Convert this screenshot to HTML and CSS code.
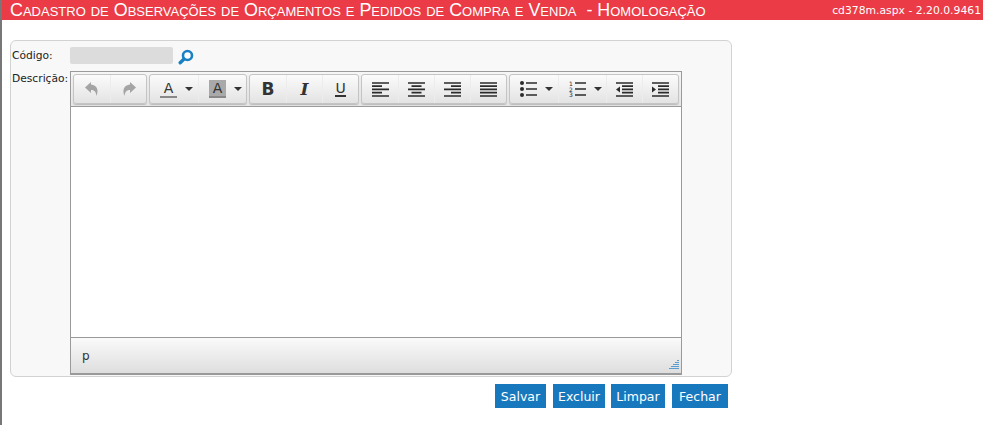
FILE: index.html
```html
<!DOCTYPE html>
<html lang="pt-BR">
<head>
    <meta charset="UTF-8">
    <meta name="viewport" content="width=device-width, initial-scale=1.0">
    <title>Cadastro de Observações de Orçamentos e Pedidos de Compra e Venda</title>
    <link rel="stylesheet" href="styles.css">
</head>
<body>
    <div class="page">
        <div class="header">
            <div class="title">Cadastro de Observações de Orçamentos e Pedidos de Compra e Venda &nbsp;- Homologação</div>
            <div class="version">cd378m.aspx - 2.20.0.9461</div>
        </div>

        <div class="panel">
            <div class="row row-code">
                <label class="label">Código:</label>
                <div class="input"></div>
                <svg class="search" width="16" height="16" viewBox="0 0 16 16">
                    <circle cx="9.500" cy="6.500" r="4.500" fill="#fff" stroke="#1a80c4" stroke-width="2.600"/>
                    <path d="M6 10 2.200 13.800" stroke="#1a80c4" stroke-width="3.400" stroke-linecap="round"/>
                </svg>
            </div>
            <div class="row">
                <label class="label label-desc">Descrição:</label>
                <div class="editor">
                    <div class="toolbar">
                        <div class="group">
                            <button class="tool off">
                                <svg width="16" height="16" viewBox="0 0 16 16"><path d="M7 1 1 6.500l6 5.500V9c3 0 5 1.500 5.500 6 2.500-6 .5-11-5.500-11.500z" fill="#a4a4a4"/></svg>
                            </button>
                            <button class="tool off">
                                <svg width="16" height="16" viewBox="0 0 16 16"><path d="M9 1l6 5.500L9 12V9c-3 0-5 1.500-5.500 6C1 9 3 4 9 3.500z" fill="#a4a4a4"/></svg>
                            </button>
                        </div>
                        <div class="group">
                            <button class="tool split">
                                <span class="letter letter-color">A</span><span class="caret"></span>
                            </button>
                            <button class="tool split">
                                <span class="letter letter-back">A</span><span class="caret"></span>
                            </button>
                        </div>
                        <div class="group">
                            <button class="tool"><span class="fmt fmt-b">B</span></button>
                            <button class="tool"><span class="fmt fmt-i">I</span></button>
                            <button class="tool"><span class="fmt fmt-u">U</span></button>
                        </div>
                        <div class="group">
                            <button class="tool">
                                <svg width="17" height="15" viewBox="0 0 17 15"><path d="M0 1h17M0 4.200h10M0 7.400h17M0 10.600h10M0 14h17" stroke="#2b2b2b" stroke-width="1.700"/></svg>
                            </button>
                            <button class="tool">
                                <svg width="17" height="15" viewBox="0 0 17 15"><path d="M0 1h17M3.500 4.200h10M0 7.400h17M3.500 10.600h10M0 14h17" stroke="#2b2b2b" stroke-width="1.700"/></svg>
                            </button>
                            <button class="tool">
                                <svg width="17" height="15" viewBox="0 0 17 15"><path d="M0 1h17M7 4.200h10M0 7.400h17M7 10.600h10M0 14h17" stroke="#2b2b2b" stroke-width="1.700"/></svg>
                            </button>
                            <button class="tool">
                                <svg width="17" height="15" viewBox="0 0 17 15"><path d="M0 1h17M0 4.200h17M0 7.400h17M0 10.600h17M0 14h17" stroke="#2b2b2b" stroke-width="1.700"/></svg>
                            </button>
                        </div>
                        <div class="group">
                            <button class="tool split">
                                <svg width="17" height="16" viewBox="0 0 17 16">
                                    <circle cx="2" cy="2" r="2" fill="#2b2b2b"/>
                                    <circle cx="2" cy="8" r="2" fill="#2b2b2b"/>
                                    <circle cx="2" cy="14" r="2" fill="#2b2b2b"/>
                                    <path d="M6 2h11M6 8h11M6 14h11" stroke="#2b2b2b" stroke-width="1.700"/>
                                </svg><span class="caret"></span>
                            </button>
                            <button class="tool split">
                                <svg width="17" height="16" viewBox="0 0 17 16">
                                    <text x="0" y="5" class="num">1</text>
                                    <text x="0" y="10.500" class="num">2</text>
                                    <text x="0" y="16" class="num">3</text>
                                    <path d="M6 2h11M6 8h11M6 14h11" stroke="#2b2b2b" stroke-width="1.700"/>
                                </svg><span class="caret"></span>
                            </button>
                            <button class="tool">
                                <svg width="17" height="15" viewBox="0 0 17 15"><path d="M0 1h17M6 4.200h11M6 7.400h11M6 10.600h11M0 14h17" stroke="#2b2b2b" stroke-width="1.700"/><path d="M4 4.500v6L0 7.500z" fill="#2b2b2b"/></svg>
                            </button>
                            <button class="tool">
                                <svg width="17" height="15" viewBox="0 0 17 15"><path d="M0 1h17M6 4.200h11M6 7.400h11M6 10.600h11M0 14h17" stroke="#2b2b2b" stroke-width="1.700"/><path d="M0 4.500v6l4-3z" fill="#2b2b2b"/></svg>
                            </button>
                        </div>
                    </div>
                    <div class="content"></div>
                    <div class="statusbar">
                        <span class="path">p</span>
                        <svg class="grip" width="12" height="12" viewBox="0 0 12 12">
                            <path d="M9 1.500h2M7 3.500h4M5 5.500h6M3 7.500h8M1 9.500h10" stroke="#5a9bd0" stroke-width="1"/>
                        </svg>
                    </div>
                </div>
            </div>
        </div>

        <div class="actions">
            <button class="btn btn-salvar">Salvar</button>
            <button class="btn btn-excluir">Excluir</button>
            <button class="btn btn-limpar">Limpar</button>
            <button class="btn btn-fechar">Fechar</button>
        </div>
    </div>
</body>
</html>
```

FILE: styles.css
```css
html, body { margin: 0; padding: 0; background: #fff; }
body { font-family: "DejaVu Sans", Verdana, sans-serif; font-size: 10px; color: #222; }
.page { height: 425px; box-sizing: border-box; border-left: 2px solid #777; padding-right: 2px; overflow: hidden; }

.header { height: 20px; background: #ea3b46; color: #fff; display: flex; justify-content: space-between; align-items: center; padding: 0 2px 0 8px; }
.title { font-family: "Liberation Sans", Arial, sans-serif; font-size: 17.900px; font-variant: small-caps; white-space: pre; }
.version { font-size: 10.800px; font-weight: 400; }

.panel { margin: 20px 0 0 8px; width: 722px; height: 337px; box-sizing: border-box; border: 1px solid #d2d2d2; border-radius: 6px; background: #f8f8f8; padding: 6px 0 0 1px; }
.row { display: flex; align-items: flex-start; }
.row-code { height: 24px; }
.label { width: 58px; font-size: 10.700px; line-height: 17px; }
.label-desc { margin-top: -1px; }
.input { width: 103px; height: 17px; background: #dcdcdc; border-radius: 2px; }
.search { margin: 2px 0 0 5px; }

.editor { width: 612px; height: 304px; box-sizing: border-box; border: 1px solid #9a9a9a; border-bottom-width: 2px; display: flex; flex-direction: column; background: #fff; }
.toolbar { height: 35px; box-sizing: border-box; display: flex; gap: 2px; padding: 2px 0 0 2px; background: linear-gradient(#f6f6f6, #e6e6e6); border-bottom: 1px solid #9a9a9a; }
.group { height: 28px; display: flex; border: 1px solid #c4c4c4; border-radius: 3px; background: linear-gradient(#fbfbfb, #e3e3e3); box-shadow: 0 1px 1px #bbb; }
.tool { width: 36px; height: 28px; padding: 0; border: 0; border-left: 1px solid #ececec; background: none; display: flex; align-items: center; justify-content: center; }
.tool:first-child { border-left: 0; }
.split { width: 48px; gap: 8px; justify-content: flex-start; padding-left: 10px; }

.letter { width: 17px; height: 18px; box-sizing: border-box; font-family: "DejaVu Sans", sans-serif; font-size: 14px; line-height: 16px; text-align: center; color: #333; border-bottom: 2px solid #888; }
.letter-back { background: #a9a9a9; }
.caret { width: 0; height: 0; border: 4px solid transparent; border-top-color: #333; border-bottom: 0; }
.fmt { font-family: "DejaVu Sans", sans-serif; font-size: 17px; color: #333; }
.fmt-b { font-weight: 700; }
.fmt-i { font-family: "DejaVu Serif", serif; font-style: italic; font-weight: 700; font-size: 17px; }
.fmt-u { font-size: 14px; border-bottom: 2px solid #333; line-height: 13px; }
.num { font-family: "DejaVu Sans", sans-serif; font-size: 6px; fill: #2b2b2b; }

.content { flex: 1; background: #fff; }
.statusbar { height: 36px; box-sizing: border-box; border-top: 1px solid #9a9a9a; background: linear-gradient(#fafafa, #dedede); display: flex; justify-content: space-between; align-items: flex-end; padding: 0 1px 2px 11px; }
.path { font-size: 12px; line-height: 30px; color: #333; }
.grip { display: block; }

.actions { display: flex; justify-content: flex-end; width: 726px; margin-top: 7px; }
.btn { height: 24px; padding: 0; border: 0; background: #1878be; color: #fff; font-family: "DejaVu Sans", sans-serif; font-size: 12.500px; }
.btn-salvar { width: 51px; }
.btn-excluir { width: 52px; margin-left: 7px; }
.btn-limpar { width: 54px; margin-left: 6px; }
.btn-fechar { width: 56px; margin-left: 7px; }
```
